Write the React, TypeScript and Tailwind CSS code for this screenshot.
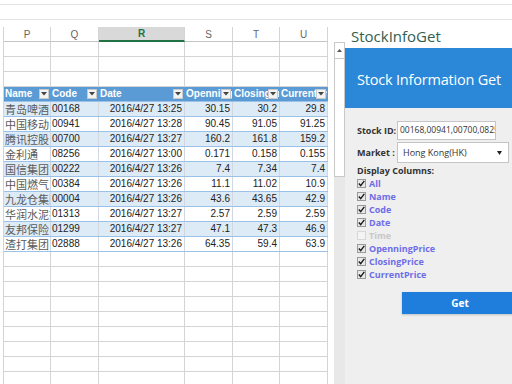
import React from 'react'

const colWidths = [47, 48, 86, 48, 47, 48]
const letters = ['P', 'Q', 'R', 'S', 'T', 'U']
const headers = ['Name', 'Code', 'Date', 'OpenningPrice', 'ClosingPrice', 'CurrentPrice']

const rows: string[][] = [
  ['青岛啤酒', '00168', '2016/4/27 13:25', '30.15', '30.2', '29.8'],
  ['中国移动', '00941', '2016/4/27 13:28', '90.45', '91.05', '91.25'],
  ['腾讯控股', '00700', '2016/4/27 13:27', '160.2', '161.8', '159.2'],
  ['金利通', '08256', '2016/4/27 13:00', '0.171', '0.158', '0.155'],
  ['国信集团', '00222', '2016/4/27 13:26', '7.4', '7.34', '7.4'],
  ['中国燃气', '00384', '2016/4/27 13:26', '11.1', '11.02', '10.9'],
  ['九龙仓集团', '00004', '2016/4/27 13:26', '43.6', '43.65', '42.9'],
  ['华润水泥控股', '01313', '2016/4/27 13:27', '2.57', '2.59', '2.59'],
  ['友邦保险', '01299', '2016/4/27 13:27', '47.1', '47.3', '46.9'],
  ['渣打集团', '02888', '2016/4/27 13:26', '64.35', '59.4', '63.9'],
]

const columns = [
  { label: 'All', checked: true },
  { label: 'Name', checked: true },
  { label: 'Code', checked: true },
  { label: 'Date', checked: true },
  { label: 'Time', checked: false },
  { label: 'OpenningPrice', checked: true },
  { label: 'ClosingPrice', checked: true },
  { label: 'CurrentPrice', checked: true },
]

function EmptyRow() {
  return (
    <div className="flex h-[15px] shrink-0 border-b border-[#d4d4d4]">
      {colWidths.map((w, i) => (
        <div key={i} style={{ width: w }} className="h-full shrink-0 border-r border-[#d4d4d4]" />
      ))}
    </div>
  )
}

function FilterButton() {
  return (
    <span className="absolute right-[1px] top-[2px] flex h-[10px] w-[10px] items-center justify-center border border-[#c9c9c9] bg-[#f3f3f3]">
      <svg width="6" height="4" viewBox="0 0 6 4">
        <path d="M0 0 L6 0 L3 3.5 Z" fill="#444" />
      </svg>
    </span>
  )
}

function Checkbox({ checked }: { checked: boolean }) {
  return (
    <span
      className={`flex h-[9px] w-[9px] shrink-0 items-center justify-center border ${
        checked ? 'border-[#9a9a9a] bg-[#e8e8e8]' : 'border-[#d8d8d8] bg-[#f4f4f4]'
      }`}
    >
      {checked && (
        <svg width="7" height="7" viewBox="0 0 7 7">
          <path d="M0.8 3.6 L2.7 5.6 L6.3 0.9" stroke="#1a1a1a" strokeWidth="1.4" fill="none" />
        </svg>
      )}
    </span>
  )
}

export default function App() {
  return (
    <div className="relative flex h-[384px] w-[512px] flex-col overflow-hidden bg-white font-['Liberation_Sans',Arial,sans-serif]">
      {/* formula area lines */}
      <div className="h-[5px] shrink-0 border-b border-[#e3e3e3]" />
      <div className="h-[15px] shrink-0 border-b border-[#e3e3e3]" />

      <div className="flex min-h-0 flex-1">
        {/* sheet */}
        <div className="flex w-[345px] shrink-0 flex-col">
          <div className="h-[7px] shrink-0" />
          <div className="flex min-h-0 flex-1">
            <div className="ml-[3px] flex w-[325px] shrink-0 flex-col overflow-hidden border-l border-[#d4d4d4]">
              {/* column letters */}
              <div className="flex h-[15px] shrink-0">
                {colWidths.map((w, i) => (
                  <div
                    key={i}
                    style={{ width: w }}
                    className={`flex h-full shrink-0 items-center justify-center border-r border-[#d4d4d4] text-[10px] ${
                      letters[i] === 'R'
                        ? 'border-b-2 border-b-[#217346] bg-[#d9d9d9] font-bold text-[#217346]'
                        : 'border-b border-b-[#c6c6c6] text-[#666]'
                    }`}
                  >
                    {letters[i]}
                  </div>
                ))}
              </div>

              <EmptyRow />
              <EmptyRow />
              <EmptyRow />

              {/* table header */}
              <div className="flex h-[15px] shrink-0 border-b border-[#9bc2e6] bg-[#5b9bd5]">
                {colWidths.map((w, i) => (
                  <div
                    key={i}
                    style={{ width: w }}
                    className="relative h-full shrink-0 overflow-hidden whitespace-nowrap border-r border-[#5b9bd5] pl-[1px] text-[10px] font-bold leading-[14px] text-white"
                  >
                    {headers[i]}
                    <FilterButton />
                  </div>
                ))}
              </div>

              {rows.map((r, ri) => (
                <div
                  key={ri}
                  className={`flex h-[15px] shrink-0 border-b border-[#9bc2e6] ${
                    ri % 2 === 0 ? 'bg-[#ddebf7]' : 'bg-white'
                  }`}
                >
                  {r.map((v, ci) => (
                    <div
                      key={ci}
                      style={{ width: colWidths[ci] }}
                      className={`h-full shrink-0 overflow-hidden whitespace-nowrap border-r border-[#d0d7e0] text-[10px] leading-[14px] ${
                        ci === 0
                          ? "pl-[1px] font-['Noto_Sans_CJK_SC',sans-serif] text-[11px] leading-[14px] text-[#5a5a5a]"
                          : ci === 1
                            ? 'pl-[1px] text-[#222]'
                            : 'pr-[2px] text-right text-[#222]'
                      }`}
                    >
                      {v}
                    </div>
                  ))}
                </div>
              ))}

              {Array.from({ length: 10 }).map((_, i) => (
                <EmptyRow key={i} />
              ))}
            </div>

            <div className="w-[6px] shrink-0" />

            {/* vertical scrollbar */}
            <div className="flex w-[11px] shrink-0 flex-col pt-[15px]">
              <div className="flex h-[17px] shrink-0 items-center justify-center border border-[#c8c8c8] bg-white">
                <svg width="5" height="3" viewBox="0 0 5 3">
                  <path d="M0 3 L2.5 0 L5 3 Z" fill="#555" />
                </svg>
              </div>
              <div className="h-[118px] shrink-0 border border-t-0 border-[#c8c8c8] bg-white" />
              <div className="flex-1 bg-[#e8e8e8]" />
            </div>
          </div>
        </div>

        {/* task pane */}
        <div className="flex min-w-0 flex-1 flex-col overflow-hidden font-['Open_Sans',sans-serif]">
          <div className="h-[28px] shrink-0 bg-white pl-[6px] pt-[6px] text-[15px] leading-[20px] text-[#31614f]">
            StockInfoGet
          </div>
          <div className="flex min-h-0 flex-1 flex-col bg-[#efefef]">
            <div className="flex h-[60px] w-[180px] shrink-0 items-center whitespace-nowrap bg-[#2b88d8] pl-[12px] pt-[3px] text-[14.5px] tracking-[-0.2px] text-white">
              Stock Information Get
            </div>

            <div className="flex flex-col px-[12px] pt-[13px] text-[9px] text-[#333]">
              <div className="flex h-[19px] items-center">
                <span className="w-[40px] shrink-0 font-bold">Stock ID:</span>
                <div className="flex h-[19px] w-[99px] shrink-0 items-center overflow-hidden whitespace-nowrap border border-[#c5c5c5] bg-white pl-[2px] text-[8.5px] text-[#333]">
                  00168,00941,00700,08256
                </div>
              </div>

              <div className="mt-[2px] flex h-[21px] items-center">
                <span className="w-[40px] shrink-0 font-bold">Market :</span>
                <div className="flex h-[21px] w-[112px] shrink-0 items-center justify-between border border-[#c5c5c5] bg-white pl-[5px] pr-[6px]">
                  <span>Hong Kong(HK)</span>
                  <svg width="5" height="4" viewBox="0 0 5 4">
                    <path d="M0 0 L5 0 L2.5 4 Z" fill="#222" />
                  </svg>
                </div>
              </div>

              <div className="mt-[2px] h-[12px] font-bold leading-[12px]">Display Columns:</div>

              <div className="flex flex-col">
                {columns.map((c) => (
                  <div key={c.label} className="flex h-[13px] items-center gap-[3px]">
                    <Checkbox checked={c.checked} />
                    <span
                      className={`font-bold leading-[13px] ${
                        c.checked ? 'text-[#6d6de8]' : 'text-[#c8c8c8]'
                      }`}
                    >
                      {c.label}
                    </span>
                  </div>
                ))}
              </div>

              <button className="ml-[45px] mt-[11px] flex h-[22px] w-[116px] shrink-0 items-center justify-center bg-[#1f7edb] text-[10px] font-bold text-white shadow-[0_1px_2px_rgba(0,0,0,0.2)]">
                Get
              </button>
            </div>
          </div>
        </div>
      </div>
    </div>
  )
}
